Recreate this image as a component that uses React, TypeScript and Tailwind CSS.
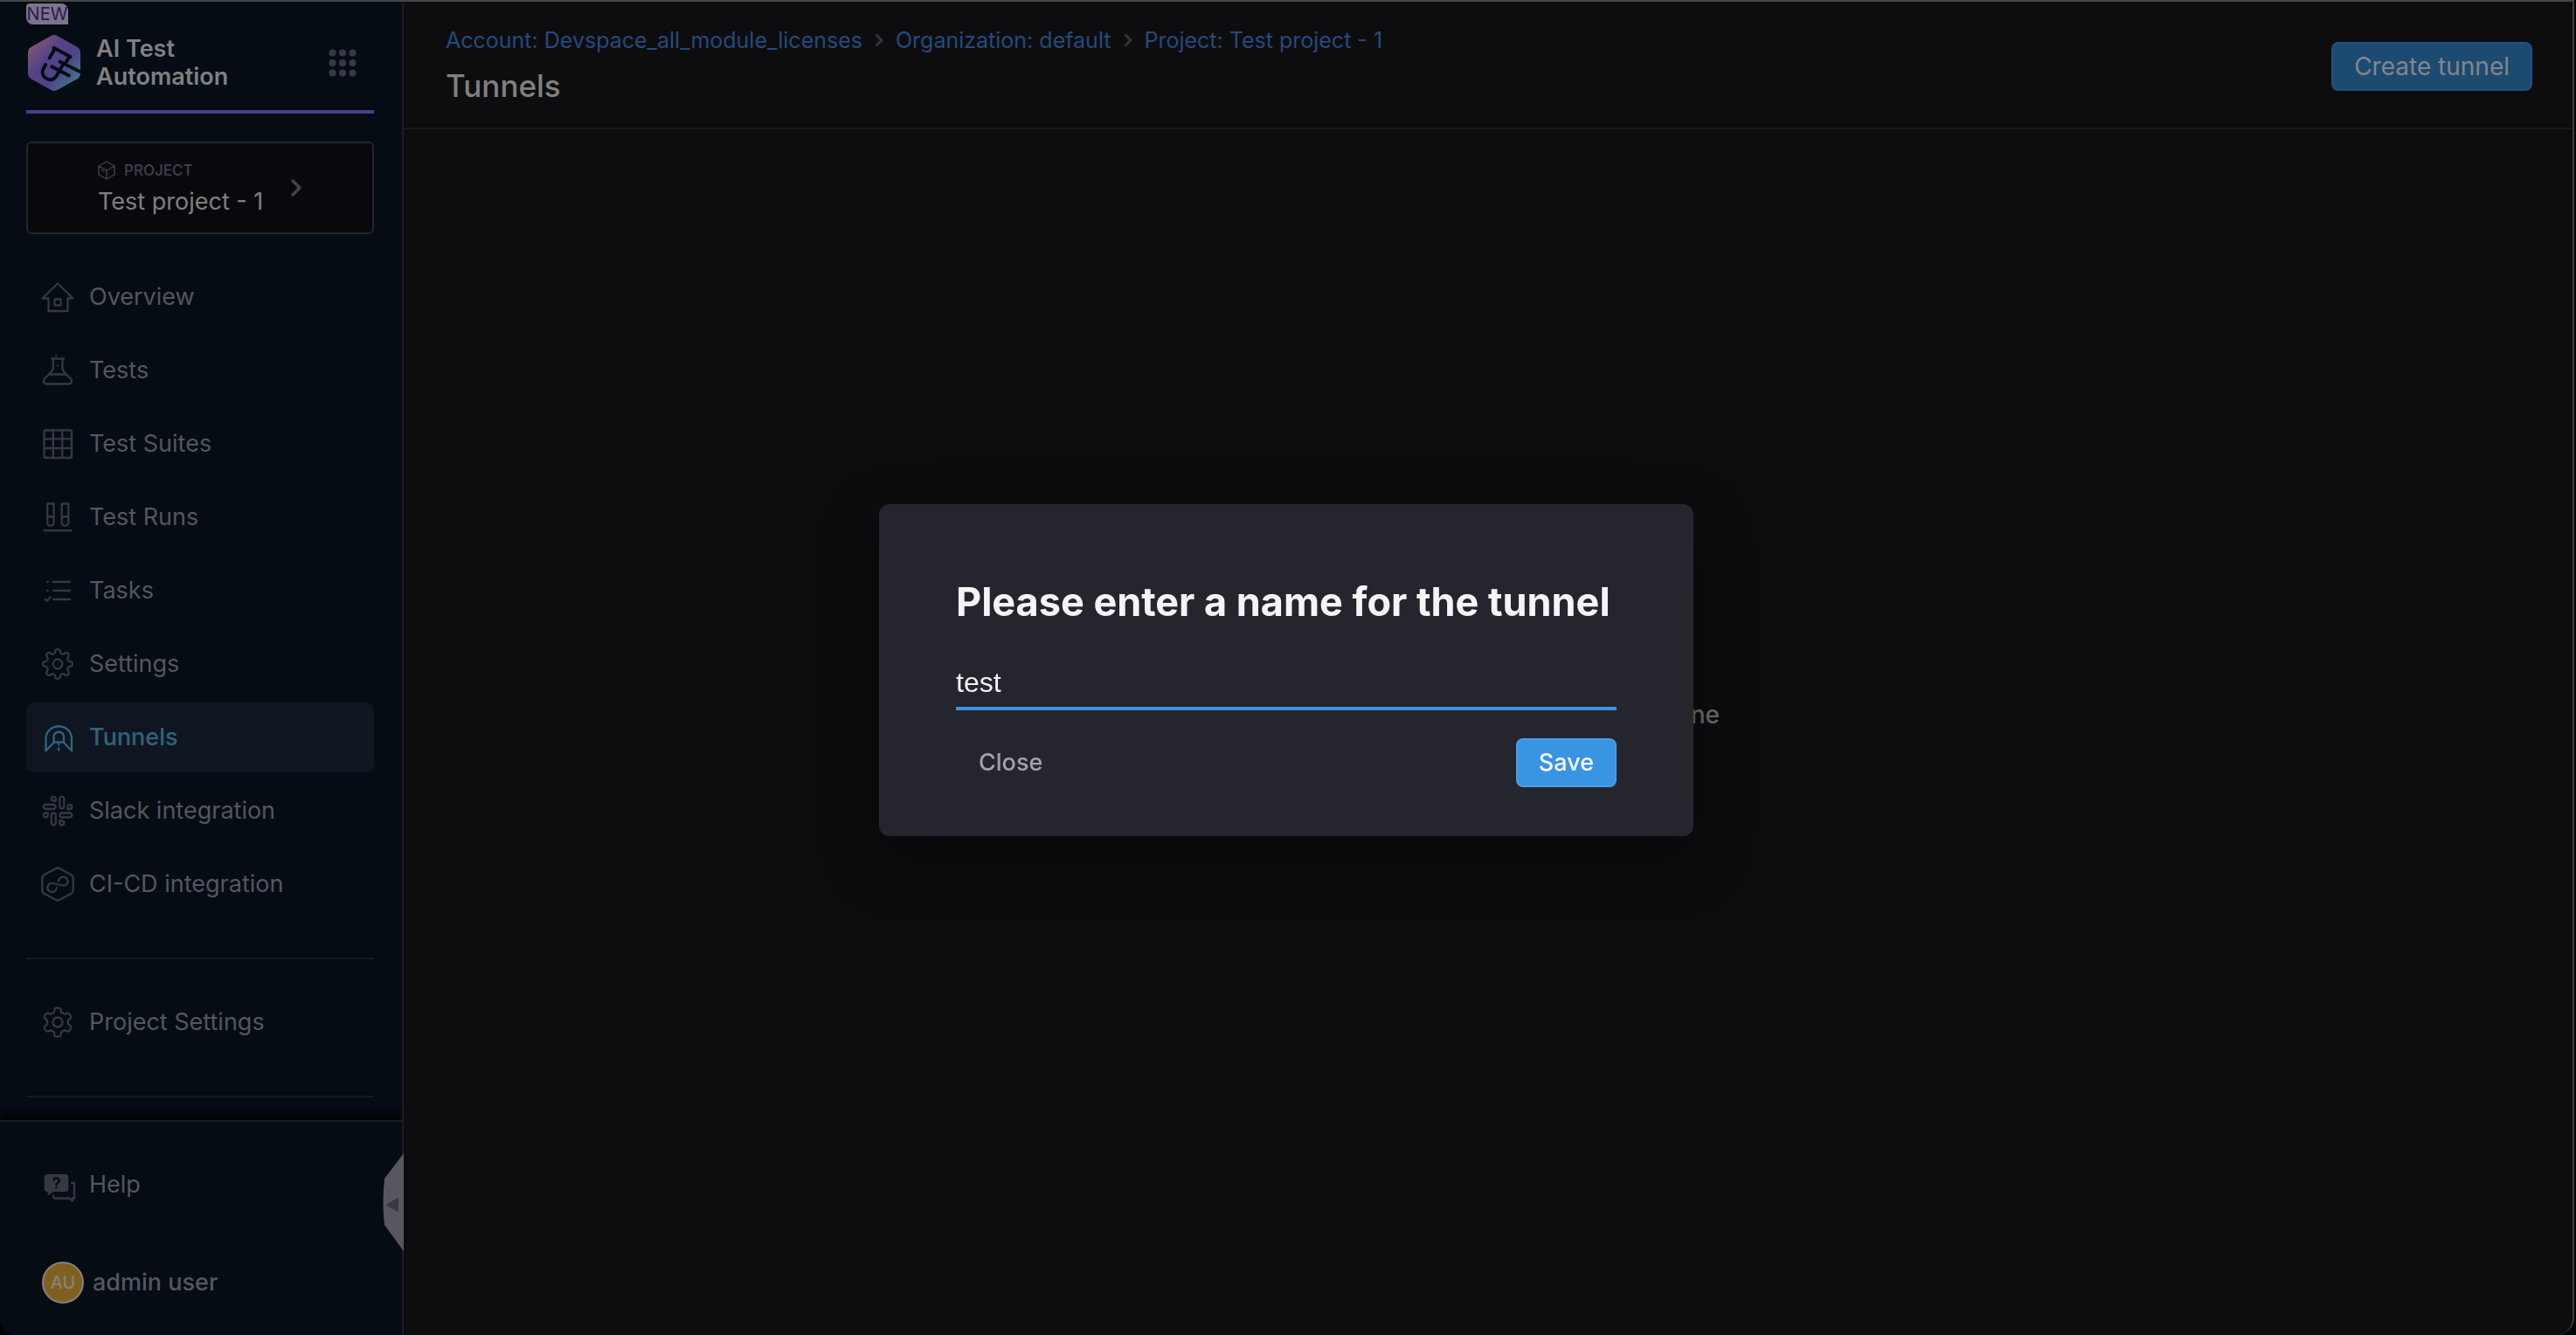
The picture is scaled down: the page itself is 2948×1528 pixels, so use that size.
import React, { useState } from "react";

function gearPath(teeth: number, base: number, depth: number, sharpness: number): string {
  const steps = 240;
  const points: string[] = [];
  for (let i = 0; i < steps; i++) {
    const angle = (i / steps) * Math.PI * 2;
    const wave = Math.tanh(sharpness * Math.cos(teeth * angle)) / Math.tanh(sharpness);
    const r = base + depth * wave;
    points.push(`${(20 + r * Math.sin(angle)).toFixed(2)} ${(20 - r * Math.cos(angle)).toFixed(2)}`);
  }
  return `M${points.join("L")}Z`;
}

function Icon({ children }: { children: React.ReactNode }) {
  return (
    <svg
      viewBox="0 0 40 40"
      className="size-10 shrink-0 overflow-visible"
      fill="none"
      stroke="currentColor"
      strokeWidth="2.3"
      strokeLinecap="round"
      strokeLinejoin="round"
      aria-hidden="true"
    >
      {children}
    </svg>
  );
}

const HomeIcon = () => (
  <Icon>
    <path d="M20 4.5 2.5 21.5H9.5V36H31.5V21.5H37.5Z" />
    <rect x="16.5" y="22.5" width="7" height="7" />
  </Icon>
);

const FlaskIcon = () => (
  <Icon>
    <path d="M13 6.5H27M14.8 7V17.5C14.8 20 12.5 22 10.5 24L5 29.5C3 32 4 35.5 7.5 35.5H32.5C36 35.5 37 32 35 29.5L29.5 24C27.5 22 25.5 20 25.5 17.5V7M10.5 24.5H29.5" />
    <path d="M18.3 3V3.1M20 14.5V14.6" />
  </Icon>
);

const GridIcon = () => (
  <Icon>
    <rect x="4.5" y="4.5" width="31.5" height="31.5" rx="1.5" />
    <path d="M14.8 4.5V36M25.3 4.5V36M4.5 14.3H36M4.5 25H36" />
  </Icon>
);

const TubesIcon = () => (
  <Icon>
    <path d="M8.2 4.5H15.5V26A3.6 3.6 0 0 1 8.2 26ZM8.2 19.5H15.5" />
    <path d="M24.7 4.5H32.3V26A3.7 3.7 0 0 1 24.7 26ZM24.7 19.5H32.3" />
    <path d="M4.5 35.2H35.5" />
  </Icon>
);

const TasksIcon = () => (
  <Icon>
    <path d="M15 10H34M15 20H34M15 30H34M8.2 10H8.5M8.2 20H8.5M6 30 8 31.8 11.5 27.5" />
  </Icon>
);

const GearIcon = () => (
  <Icon>
    <path d={gearPath(8, 14.7, 2.2, 1.6)} />
    <circle cx="20" cy="20" r="5.3" />
  </Icon>
);

const CogIcon = () => (
  <Icon>
    <path d={gearPath(6, 14.2, 2.3, 2.5)} />
    <circle cx="20" cy="20" r="5.5" />
  </Icon>
);

const TunnelIcon = () => (
  <Icon>
    <path d="M6.5 35.3V19.5A15 15 0 0 1 36 19.5V35.3L27 26V19.5A5.7 5.7 0 0 0 15.5 19.5V26L6.5 35.3M15.5 25.5H27M21.2 26V28.5M21.2 32.5V34.5" />
  </Icon>
);

const SlackIcon = () => (
  <Icon>
    <rect x="22.3" y="3.8" width="5" height="13.5" rx="2.5" />
    <rect x="12.8" y="22.5" width="5" height="13.7" rx="2.5" />
    <rect x="3.8" y="13" width="13.8" height="5" rx="2.5" />
    <rect x="22.5" y="22.5" width="13.7" height="5" rx="2.5" />
    <path d="M17.8 8.8H15.3A2.5 2.5 0 1 1 17.8 6.3Z" />
    <path d="M31.3 18V15.5A2.5 2.5 0 1 1 33.8 18Z" />
    <path d="M8.8 22.5V25A2.5 2.5 0 1 1 6.3 22.5Z" />
    <path d="M22.3 31.5H24.8A2.5 2.5 0 1 1 22.3 34Z" />
  </Icon>
);

const PipelineIcon = () => (
  <Icon>
    <path d="M17.5 2.2Q20 .8 22.5 2.2L35 9Q37.7 10.5 37.7 13.5V26.5Q37.7 29.5 35 31L22.5 37.8Q20 39.2 17.5 37.8L5 31Q2.3 29.5 2.3 26.5V13.5Q2.3 10.5 5 9Z" />
    <path d="M18.8 24C18.5 28 15.5 29.5 13.2 29 9.5 28.5 8 25.5 8.5 23 9.2 20 12 18.8 14.5 19L25.5 21.5C29.5 22 31.7 19.5 31.7 17 31.7 13.5 29 11.5 26 11.7 23 12 21.5 14 20.8 16.5" />
  </Icon>
);

const HelpIcon = () => (
  <Icon>
    <path
      d="M8 8H29Q32.3 8 32.3 11.3V24.7Q32.3 28 29 28H15L9 32.5 8.3 28H8Q4.7 28 4.7 24.7V11.3Q4.7 8 8 8Z"
      fill="currentColor"
      stroke="none"
    />
    <path
      d="M15.6 14.6Q16 12.4 18.5 12.4 21.7 12.6 21.7 15.2C21.7 17.6 18.5 17.6 18.5 20.2M18.5 23.4V23.6"
      stroke="#050c14"
      strokeWidth="2.4"
    />
    <path d="M36 18H39V35.5H37V38.5L33 35.5H17Q15 35.5 15 32.5" />
  </Icon>
);

const navItems = [
  { label: "Overview", icon: <HomeIcon /> },
  { label: "Tests", icon: <FlaskIcon /> },
  { label: "Test Suites", icon: <GridIcon /> },
  { label: "Test Runs", icon: <TubesIcon /> },
  { label: "Tasks", icon: <TasksIcon /> },
  { label: "Settings", icon: <GearIcon /> },
  { label: "Tunnels", icon: <TunnelIcon />, active: true },
  { label: "Slack integration", icon: <SlackIcon /> },
  { label: "CI-CD integration", icon: <PipelineIcon /> },
];

function NavLink({ label, icon, active }: { label: string; icon: React.ReactNode; active?: boolean }) {
  return (
    <a
      href="#"
      aria-current={active ? "page" : undefined}
      className={
        active
          ? "flex h-20 items-center gap-4 rounded-lg bg-[#0f1621] px-4 font-medium text-[#30637d]"
          : "flex h-20 items-center gap-4 rounded-lg px-4 text-[#363742]"
      }
    >
      {icon}
      <span className={active ? "text-[27px]" : "text-[27px] text-[#56555f]"}>{label}</span>
    </a>
  );
}

function Logo() {
  return (
    <svg viewBox="0 0 60 64" className="h-16 w-15 shrink-0" fill="none" aria-hidden="true">
      <defs>
        <linearGradient id="logoFill" x1="4" y1="10" x2="56" y2="56" gradientUnits="userSpaceOnUse">
          <stop offset="0" stopColor="#82566f" />
          <stop offset="0.35" stopColor="#56408a" />
          <stop offset="0.65" stopColor="#4d4587" />
          <stop offset="1" stopColor="#417a8b" />
        </linearGradient>
      </defs>
      <path
        d="M26 1.2Q30-1 34 1.2L56 13.5Q60 15.8 60 20V44Q60 48.2 56 50.5L34 62.8Q30 65 26 62.8L4 50.5Q0 48.2 0 44V20Q0 15.8 4 13.5Z"
        fill="url(#logoFill)"
      />
      <path
        d="M29.5 14.7 48.5 25M30.5 16 24.7 26.5M47 25.5 44 30.5M36.5 30.5 59.5 42M40.5 33 33.5 45.5C31 50 27 52.5 22.5 50.5 17 48 15.5 43.5 17.5 39L20.2 34M27.3 36.3 47 46.5"
        stroke="#050c14"
        strokeWidth="3.8"
        strokeLinecap="round"
        strokeLinejoin="round"
      />
    </svg>
  );
}

function Sidebar() {
  return (
    <aside className="relative flex w-[462px] shrink-0 flex-col border-r-2 border-[#1b1c22] bg-[#050c14]">
      <div className="flex flex-1 flex-col pt-0.5 pr-8 pl-[30px]">
        <span className="flex h-6 w-12 items-center justify-center rounded-tl rounded-tr-lg rounded-bl-lg bg-[#7c758a] text-xl text-[#2c1a52]">
          NEW
        </span>
        <div className="mt-3 flex h-[90px] items-start justify-between border-b-4 border-[#4e3d82] pr-5 pl-0.5">
          <div className="flex items-center gap-[18px]">
            <Logo />
            <p className="w-44 text-[27px] leading-8 font-semibold text-[#808080]">AI Test Automation</p>
          </div>
          <button type="button" aria-label="Modules" className="mt-4 flex size-8 items-center justify-center">
            <svg viewBox="0 0 32 32" className="size-8" fill="#383946" aria-hidden="true">
              {[4.5, 16, 27.5].map((y) =>
                [4.5, 16, 27.5].map((x) => <circle key={`${x}-${y}`} cx={x} cy={y} r="4" />),
              )}
            </svg>
          </button>
        </div>

        <button
          type="button"
          className="mt-8 flex h-[106px] items-center gap-8 rounded-md border-2 border-[#26272e] bg-[#09090d] pl-20 text-left"
        >
          <span className="flex flex-col">
            <span className="flex items-center gap-2.5 text-[17px] leading-6 font-medium text-[#40414d]">
              <svg
                viewBox="0 0 20 22"
                className="h-[22px] w-5"
                fill="none"
                stroke="currentColor"
                strokeWidth="1.4"
                strokeLinejoin="round"
                aria-hidden="true"
              >
                <path d="M10 1 19 6V16L10 21 1 16V6ZM1 6 10 11 19 6M10 11V21M4 10.5 7.5 12.5" />
              </svg>
              PROJECT
            </span>
            <span className="mt-2 text-[27px] leading-8 whitespace-nowrap text-[#808080]">Test project - 1</span>
          </span>
          <svg
            viewBox="0 0 12 20"
            className="h-5 w-3 overflow-visible"
            fill="none"
            stroke="#42434f"
            strokeWidth="3.5"
            strokeLinecap="round"
            strokeLinejoin="round"
            aria-hidden="true"
          >
            <path d="M2 2 10 10 2 18" />
          </svg>
        </button>

        <nav className="mt-8 flex flex-col gap-1">
          {navItems.map((item) => (
            <NavLink key={item.label} {...item} />
          ))}
        </nav>
        <div className="mt-11 border-y-2 border-[#16191f] pt-8 pb-11">
          <NavLink label="Project Settings" icon={<CogIcon />} />
        </div>
      </div>

      <footer className="mt-[26px] border-t-2 border-[#1b1c22] px-[30px] pt-8 pb-7 shadow-[0_-4px_12px_2px_#000000] [clip-path:inset(-20px_0_0_0)]">
        <NavLink label="Help" icon={<HelpIcon />} />
        <button type="button" className="mt-10 flex h-16 w-full items-center gap-2.5 pl-[18px]">
          <span className="flex size-12 items-center justify-center rounded-full border-2 border-[#85807a] bg-[#7f6021] text-xl font-medium text-[#85837d]">
            AU
          </span>
          <span className="text-[27px] font-medium text-[#56555f]">admin user</span>
        </button>
      </footer>

      <button type="button" aria-label="Collapse sidebar" className="absolute -right-0.5 bottom-24 h-28 w-6">
        <svg viewBox="0 0 24 112" className="h-28 w-6" aria-hidden="true">
          <path d="M24 0 2 29Q-1 56 2 82L24 112Z" fill="#58575f" />
          <path d="M5 59 17 52V66Z" fill="#383946" stroke="#383946" strokeWidth="2" strokeLinejoin="round" />
        </svg>
      </button>
    </aside>
  );
}

function Crumb({ children }: { children: React.ReactNode }) {
  return (
    <a href="#" className="text-[#244a7c]">
      {children}
    </a>
  );
}

function CrumbArrow() {
  return (
    <svg viewBox="0 0 10 16" className="h-4 w-2.5" fill="none" stroke="#34353b" strokeWidth="3" aria-hidden="true">
      <path d="M1.5 1.5 8 8 1.5 14.5" />
    </svg>
  );
}

function TunnelDialog() {
  const [name, setName] = useState("test");
  return (
    <div className="fixed inset-0 flex items-center justify-center pt-1.5 pr-1">
      <form
        role="dialog"
        aria-modal="true"
        aria-labelledby="tunnel-title"
        onSubmit={(event) => event.preventDefault()}
        className="w-full max-w-[932px] rounded-xl bg-[#25252e] px-[88px] pt-20 pb-14 shadow-[0_24px_70px_#00000070]"
      >
        <h2 id="tunnel-title" className="text-[45px] leading-[64px] font-bold whitespace-nowrap text-[#f5f5f7]">
          <label htmlFor="tunnel-name">Please enter a name for the tunnel</label>
        </h2>
        <input
          id="tunnel-name"
          type="text"
          value={name}
          onChange={(event) => setName(event.target.value)}
          className="mt-7 block h-16 w-full border-b-4 border-[#3994e2] bg-transparent pt-1 font-['Liberation_Sans',sans-serif] text-[32px] text-[#f3f3f5] outline-none"
        />
        <div className="mt-8 flex h-14 items-center justify-between text-[27px] font-medium">
          <button type="button" className="h-14 px-[26px] text-[#a3a1ab]">
            Close
          </button>
          <button type="submit" className="h-14 rounded-lg border-2 border-[#4a9de5] bg-[#3994e2] px-6 text-[#f5f7fa]">
            Save
          </button>
        </div>
      </form>
    </div>
  );
}

export default function App() {
  return (
    <div className="min-h-screen bg-[#020508] pr-0.5 font-['Inter',sans-serif]">
      <div className="flex min-h-screen overflow-hidden rounded-b-[20px] border-t-2 border-r-2 border-t-[#464648] border-r-[#3b3b3d] bg-[#0d0d0f]">
        <Sidebar />
        <main className="flex flex-1 flex-col">
          <header className="flex h-[146px] items-center justify-between border-b-2 border-[#18181b] pt-1 pr-[46px] pl-12">
            <div>
              <nav aria-label="Breadcrumb" className="flex items-center gap-3.5 text-[25px] leading-8">
                <Crumb>Account: Devspace_all_module_licenses</Crumb>
                <CrumbArrow />
                <Crumb>Organization: default</Crumb>
                <CrumbArrow />
                <Crumb>Project: Test project - 1</Crumb>
              </nav>
              <h1 className="mt-3 text-[35px] leading-12 font-medium text-[#808080]">Tunnels</h1>
            </div>
            <button
              type="button"
              className="h-14 rounded-lg border-2 border-[#25507a] bg-[#1d4a71] px-6 text-[28px] text-[#84868a]"
            >
              Create tunnel
            </button>
          </header>
          <section className="flex flex-1 items-center justify-center pb-10">
            <p className="w-[530px] text-right text-[28px] font-medium text-[#6f6f72]">ne</p>
          </section>
        </main>
      </div>
      <TunnelDialog />
    </div>
  );
}
